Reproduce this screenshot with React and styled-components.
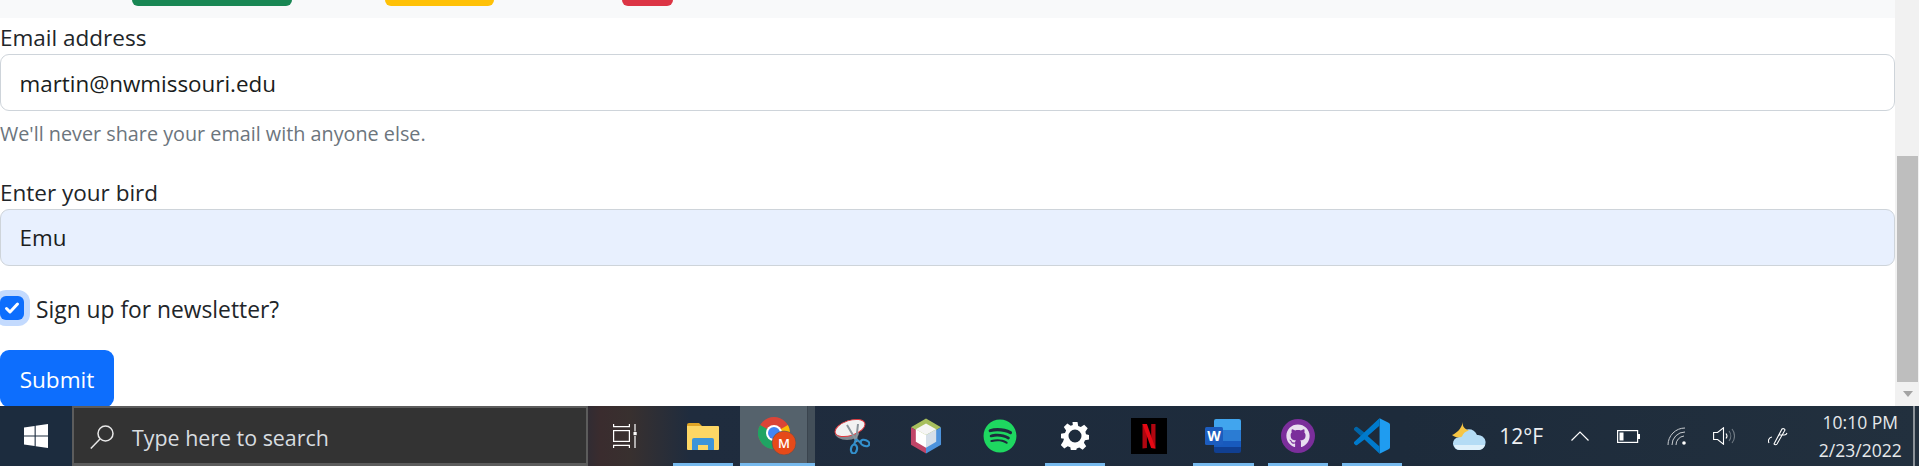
import React from "react";
import styled, { createGlobalStyle } from "styled-components";
import { FaGithub, FaSpotify } from "react-icons/fa";

const Global = createGlobalStyle`
  html, body { margin: 0; padding: 0; height: 466px; overflow: hidden; background: #fff; }
  #root { height: 466px; }
  * { box-sizing: border-box; }
`;

const Screen = styled.div`
  display: flex; flex-direction: column; width: 1919px; height: 466px; overflow: hidden;
  font-family: "Open Sans", "Noto Sans", sans-serif; color: #212529;
`;
const Browser = styled.div`display: flex; height: 406px; flex: none;`;
const Page = styled.main`flex: 1; min-width: 0; overflow: hidden;`;

const TopBar = styled.div`
  height: 18px; background: #f8f9fa; display: flex; align-items: flex-start;
`;
const StubButton = styled.span`
  height: 6px; width: ${p => p.$w}px; margin-left: ${p => p.$ml}px; background: ${p => p.$c};
  border-radius: 0 0 6px 6px; flex: none;
`;

const Group = styled.div`margin-bottom: ${p => p.$mb ?? 24}px;`;
const Label = styled.div`font-size: 22.5px; line-height: 36px; height: 36px; padding-top: 2px;`;
const Field = styled.div`
  height: 57px; border: 1.5px solid #ced4da; border-radius: 9px; padding: 2px 18.5px 0;
  display: flex; align-items: center; font-size: 22.4px; line-height: 36px; color: #1a1d20;
  background: ${p => (p.$filled ? "#e8f0fe" : "#fff")};
`;
const Help = styled.div`margin-top: 6px; padding-top: 1px; height: 31.5px; font-size: 19.8px; line-height: 31.5px; color: #6c757d;`;
const CheckRow = styled.label`display: flex; align-items: center; height: 36px; gap: 12px; margin-bottom: 24px;`;
const Box = styled.span`
  width: 24px; height: 24px; border-radius: 6px; background: #0d6efd; flex: none;
  box-shadow: 0 0 0 6px #c3dafe; display: flex; align-items: center; justify-content: center;
`;
const CheckText = styled.span`font-size: 22.8px; line-height: 36px; padding-top: 4px;`;
const Submit = styled.button`
  display: block; width: 114px; height: 57px; border: 0; border-radius: 9px; padding: 4px 0 0; background: #0d6efd;
  color: #fff; font: inherit; font-size: 22.6px; line-height: 36px;
`;

const Scroll = styled.div`
  width: 24px; flex: none; background: #f1f1f1; display: flex; flex-direction: column; align-items: flex-end; padding-right: 1px;
`;
const ScrollGap = styled.div`height: 156px; flex: none;`;
const Thumb = styled.div`height: 226px; width: 21px; background: #bebebe; flex: none;`;
const ArrowSlot = styled.div`flex: 1; width: 21px; display: flex; align-items: center; justify-content: center;`;
const Arrow = styled.span`
  width: 0; height: 0; border-left: 5.5px solid transparent; border-right: 5.5px solid transparent; border-top: 6px solid #a3a3a3;
`;

const Taskbar = styled.footer`
  height: 60px; flex: none; display: flex; align-items: stretch;
  background: linear-gradient(90deg, #1c2c3e 0, #1c2c3e 560px, #3a2c2e 600px, #38302f 630px, #1f2c3e 690px, #1d2b3b 1400px, #22303e 1919px);
  color: #fff;
`;
const StartCell = styled.div`width: 72px; flex: none; display: flex; align-items: center; justify-content: center;`;
const Search = styled.div`
  width: 516px; flex: none; background: #333; border: 2px solid #5c5c5c; border-bottom-width: 3px;
  display: flex; align-items: center; padding: 3px 0 0 16px; gap: 18px;
  font-size: 21.4px; color: #d8dde0;
`;
const TaskView = styled.div`width: 78px; flex: none; display: flex; align-items: center; justify-content: center; padding-right: 5px;`;
const TaskCell = styled.div`
  position: relative; width: 74.33px; flex: none; display: flex; align-items: center; justify-content: center;
  background: ${p => (p.$active ? "#55626c" : "transparent")};
  ${p => p.$running && `
    &::after { content: ""; position: absolute; left: 7px; right: 7px; bottom: 0; height: 3px; background: #76b9ed; }
  `}
  ${p => p.$active && `
    &::after { content: ""; position: absolute; left: 0; right: 0; bottom: 0; height: 3px; background: #76b9ed; }
    &::before { content: ""; position: absolute; right: 0; top: 0; bottom: 3px; width: 7px; background: #434f59; border-left: 1px solid #3a444e; }
  `}
`;
const Weather = styled.div`
  margin-left: 43px; display: flex; align-items: center; gap: 13px; width: 105px; flex: none;
  font-size: 21px; color: #eef0f2;
`;
const TraySlot = styled.span`display: flex; align-items: center; justify-content: center; width: ${p => p.$w}px; flex: none;`;
const Clock = styled.div`
  width: 102px; flex: none; display: flex; flex-direction: column; align-items: center; justify-content: center;
  font-size: 17.5px; line-height: 28px; color: #e6e9eb;
`;
const ShowDesktop = styled.div`width: 2px; background: #8b9299; margin-left: 2px; flex: none;`;

const WinIcon = () => (
  <svg width="24" height="24" viewBox="0 0 24 24" fill="#fff">
    <path d="M0 3.4 10.6 2v9.4H0zM11.7 1.8 24 0v11.4H11.7zM0 12.6h10.6V22L0 20.6zM11.7 12.6H24V24l-12.3-1.8z" />
  </svg>
);
const SearchIcon = () => (
  <svg width="24" height="24" viewBox="0 0 24 24" fill="none" stroke="#e8e8e8" strokeWidth="1.5">
    <circle cx="15.5" cy="8.5" r="7.5" />
    <path d="M10 14 .8 23.5" />
  </svg>
);
const TaskViewIcon = () => (
  <svg width="24" height="24" viewBox="0 0 24 24" fill="none" stroke="#fff" strokeWidth="1.2">
    <path d="M.6 0v2.6h15.8V0M.6 24v-2.6h15.8V24" />
    <rect x=".6" y="6.6" width="15.8" height="10.8" />
    <path d="M22 0v7.6M22 12v12" />
    <rect x="20.5" y="8" width="3.2" height="3.2" fill="#fff" stroke="none" />
  </svg>
);
const Explorer = () => (
  <svg width="32" height="27" viewBox="0 0 32 27">
    <path d="M0 2a2 2 0 0 1 2-2h10l4 4H0z" fill="#e0a526" />
    <path d="M0 3h31a1 1 0 0 1 1 1v22a1 1 0 0 1-1 1H1a1 1 0 0 1-1-1z" fill="#fdd765" />
    <path d="M5 27V17a2 2 0 0 1 2-2h18a2 2 0 0 1 2 2v10h-6v-5H11v5z" fill="#3d94d8" />
  </svg>
);
const Chrome = () => (
  <svg width="38" height="38" viewBox="0 0 38 38">
    <circle cx="16" cy="16" r="16" fill="#db4437" />
    <path d="M16 16 29.9 8a16 16 0 0 1-7 22z" fill="#fbbc04" />
    <path d="M16 16 2.1 8a16 16 0 0 0 13.9 24l7-2z" fill="#1fa463" />
    <circle cx="16" cy="16" r="8" fill="#fff" />
    <circle cx="16" cy="16" r="6" fill="#4285f4" />
    <circle cx="26" cy="26" r="12" fill="#e64a19" stroke="#4a545c" strokeWidth="0.6" />
    <text x="26" y="31" textAnchor="middle" fontSize="13" fontWeight="600" fill="#fff" fontFamily="Open Sans">M</text>
  </svg>
);
const Snip = () => (
  <svg width="36" height="36" viewBox="0 0 36 36">
    <ellipse cx="13" cy="15" rx="12" ry="7" fill="#7f8890" />
    <ellipse cx="16" cy="10" rx="15.5" ry="7.5" fill="#f2f2f2" stroke="#e0393e" strokeWidth="1" transform="rotate(-18 16 10)" />
    <path d="M13 7 23 24M24 6 22 24" stroke="#8b949b" strokeWidth="2" fill="none" />
    <g fill="none" stroke="#3390cc" strokeWidth="2.2">
      <ellipse cx="20" cy="31" rx="3" ry="4.5" transform="rotate(10 20 31)" />
      <ellipse cx="31" cy="25" rx="4.5" ry="3" transform="rotate(20 31 25)" />
      <path d="M20 27 22 21M27 25 22 21" />
    </g>
  </svg>
);
const Boxy = () => (
  <svg width="32" height="36" viewBox="0 0 33 36">
    <path d="M16.5 0 32 9 16.5 18 1 9z" fill="#a7bf5d" />
    <path d="M1 9 16.5 18V36L1 27z" fill="#c04568" />
    <path d="M32 9 16.5 18V36L32 27z" fill="#4d93dc" />
    <path d="M16.5 5 27 11 16.5 17 6 11z" fill="#f5f5f5" />
    <path d="M6 11 16.5 17V30L6 24z" fill="#fff" />
    <path d="M27 11 16.5 17V30L27 24z" fill="#d5dfe9" />
  </svg>
);
const Netflix = () => (
  <svg width="36" height="36" viewBox="0 0 36 36">
    <rect width="36" height="36" fill="#000" />
    <path d="M11.5 6h4.4v24l-4.4.6z" fill="#b00610" />
    <path d="M20.2 6h4.3v24.6l-4.3-.6z" fill="#b00610" />
    <path d="M11.5 6h4.4l8.6 24.6-4.3-.6z" fill="#e50914" />
  </svg>
);
const Word = () => (
  <svg width="36" height="34" viewBox="0 0 36 34">
    <path d="M9 2a2 2 0 0 1 2-2h23a2 2 0 0 1 2 2v9H9z" fill="#41a5ee" />
    <rect x="9" y="11" width="27" height="11" fill="#2b7cd3" />
    <rect x="9" y="22" width="27" height="6" fill="#185abd" />
    <path d="M9 28h27v4a2 2 0 0 1-2 2H11a2 2 0 0 1-2-2z" fill="#103f91" />
    <rect x="0" y="8" width="18" height="18" rx="1.5" fill="#1c5cbe" />
    <text x="9" y="22" textAnchor="middle" fontSize="14" fontWeight="700" fill="#fff" fontFamily="Open Sans">W</text>
  </svg>
);
const GithubBadge = styled.span`
  width: 34px; height: 34px; border-radius: 50%; background: #7b2e9b; display: flex; align-items: center; justify-content: center;
`;
const Github = () => <GithubBadge><FaGithub size={24} color="#e9dff0" /></GithubBadge>;
const VSCode = () => (
  <svg width="36" height="36" viewBox="0 0 100 100">
    <path d="M71 99 96 87a6 6 0 0 0 4-6V19a6 6 0 0 0-4-6L71 1 71 99z" fill="#1f9cf0" />
    <path d="M71 1 29 40 9 25a4 4 0 0 0-5 0L1 28a4 4 0 0 0 0 6l18 16 18-1 34-28z" fill="#0065a9" />
    <path d="M71 99 29 60 9 75a4 4 0 0 1-5 0L1 72a4 4 0 0 1 0-6L71 1v20L38 50l33 29z" fill="#007acc" />
  </svg>
);
const Gear = () => (
  <svg width="28" height="28" viewBox="0 0 28 28">
    <path fill="#fff" fillRule="evenodd" d="M11.5 0h5l.7 4 2.6 1.1 3.4-2.3 3.5 3.5-2.3 3.4L25 12.2l3 .7v4.6l-4 .7-1.1 2.6 2.3 3.4-3.5 3.5-3.4-2.3-2.6 1.1-.7 2.5h-5l-.7-3.7-2.6-1.1-3.4 2.3-3.5-3.5 2.3-3.4L3 16.8l-3-.5v-4.6l4-.7 1.1-2.6-2.3-3.4 3.5-3.5 3.4 2.3 2.1-.9zM14 7.5a6.5 6.5 0 1 0 0 13 6.5 6.5 0 0 0 0-13z" />
  </svg>
);
const Cloud = () => (
  <svg width="34" height="29" viewBox="0 0 34 29">
    <path d="M8 28a6.5 6.5 0 0 1-1-13 9.5 9.5 0 0 1 18-2 7.5 7.5 0 0 1 2 15z" fill="#b4dcf5" />
    <path d="M8 28a6.5 6.5 0 0 1-6-5h31a7 7 0 0 1-6 5z" fill="#dff1fb" />
    <path d="M11 0C9 7 5 11 0 13c3 2.5 7 3 10 1.5 1-3 3-5 7-6C13 7 10 5 11 0z" fill="#f6c544" />
  </svg>
);
const Chevron = () => (
  <svg width="18" height="10" viewBox="0 0 18 10" fill="none" stroke="#fff" strokeWidth="1.2"><path d="M.5 9.5 9 1l8.5 8.5" /></svg>
);
const Battery = () => (
  <svg width="23" height="13" viewBox="0 0 23 13">
    <rect x=".6" y=".6" width="20" height="11.8" fill="none" stroke="#fff" strokeWidth="1.2" />
    <rect x="2.5" y="2.5" width="4" height="8" fill="#fff" />
    <rect x="21" y="4" width="2" height="5" fill="#fff" />
  </svg>
);
const Wifi = () => (
  <svg width="20" height="18" viewBox="0 0 20 18" fill="none" stroke="#c8ccd0" strokeWidth="1">
    <path d="M1 18A17 17 0 0 1 18 1" />
    <path d="M5 18A13 13 0 0 1 18 5" />
    <path d="M9 18A9 9 0 0 1 17 9" />
    <circle cx="17" cy="16" r="1.8" fill="#fff" stroke="none" />
  </svg>
);
const Speaker = () => (
  <svg width="22" height="18" viewBox="0 0 22 18" fill="none" strokeWidth="1.1">
    <path d="M.6 5.5h4L10.5.8v16.4L4.6 12.5h-4z" stroke="#fff" />
    <path d="M13 6.5a4 4 0 0 1 0 5" stroke="#fff" />
    <path d="M16 4a8 8 0 0 1 0 10M19 2a11 11 0 0 1 0 14" stroke="#727c85" />
  </svg>
);
const Pen = () => (
  <svg width="20" height="20" viewBox="0 0 20 20" fill="none" stroke="#fff" strokeWidth="1.1">
    <path d="M6 18 14 3a2 2 0 0 1 3 1l-8 14a2 2 0 0 1-3 0zM11 9h5a3 3 0 0 0 3-2M4 11a4 4 0 0 0-3 6" />
  </svg>
);
const Spotify = () => <FaSpotify size={34} color="#1ed760" />;

const taskIcons = [
  { key: "explorer", Icon: Explorer, running: true },
  { key: "chrome", Icon: Chrome, active: true },
  { key: "snip", Icon: Snip },
  { key: "boxy", Icon: Boxy },
  { key: "spotify", Icon: Spotify },
  { key: "gear", Icon: Gear, running: true },
  { key: "netflix", Icon: Netflix },
  { key: "word", Icon: Word, running: true },
  { key: "github", Icon: Github, running: true },
  { key: "vscode", Icon: VSCode, running: true },
];

export default function App() {
  return (
    <Screen>
      <Global />
      <Browser>
        <Page>
          <TopBar>
            <StubButton $ml={132} $w={160} $c="#198754" />
            <StubButton $ml={93} $w={109} $c="#ffc107" />
            <StubButton $ml={128} $w={51} $c="#dc3545" />
          </TopBar>
          <Group>
            <Label>Email address</Label>
            <Field>martin@nwmissouri.edu</Field>
            <Help>We'll never share your email with anyone else.</Help>
          </Group>
          <Group>
            <Label>Enter your bird</Label>
            <Field $filled>Emu</Field>
          </Group>
          <CheckRow>
            <Box>
              <svg width="16" height="16" viewBox="0 0 16 16" fill="none" stroke="#fff" strokeWidth="3" strokeLinecap="round" strokeLinejoin="round"><path d="M2.5 8.5 6 12l7.5-8" /></svg>
            </Box>
            <CheckText>Sign up for newsletter?</CheckText>
          </CheckRow>
          <Submit>Submit</Submit>
        </Page>
        <Scroll>
          <ScrollGap />
          <Thumb />
          <ArrowSlot><Arrow /></ArrowSlot>
        </Scroll>
      </Browser>
      <Taskbar>
        <StartCell><WinIcon /></StartCell>
        <Search><SearchIcon />Type here to search</Search>
        <TaskView><TaskViewIcon /></TaskView>
        {taskIcons.map(({ key, Icon, running, active }) => (
          <TaskCell key={key} $running={running} $active={active}><Icon /></TaskCell>
        ))}
        <Weather><Cloud />12°F</Weather>
        <TraySlot $w={46}><Chevron /></TraySlot>
        <TraySlot $w={50}><Battery /></TraySlot>
        <TraySlot $w={48}><Wifi /></TraySlot>
        <TraySlot $w={46}><Speaker /></TraySlot>
        <TraySlot $w={62}><Pen /></TraySlot>
        <Clock><span>10:10 PM</span><span>2/23/2022</span></Clock>
        <ShowDesktop />
      </Taskbar>
    </Screen>
  );
}
